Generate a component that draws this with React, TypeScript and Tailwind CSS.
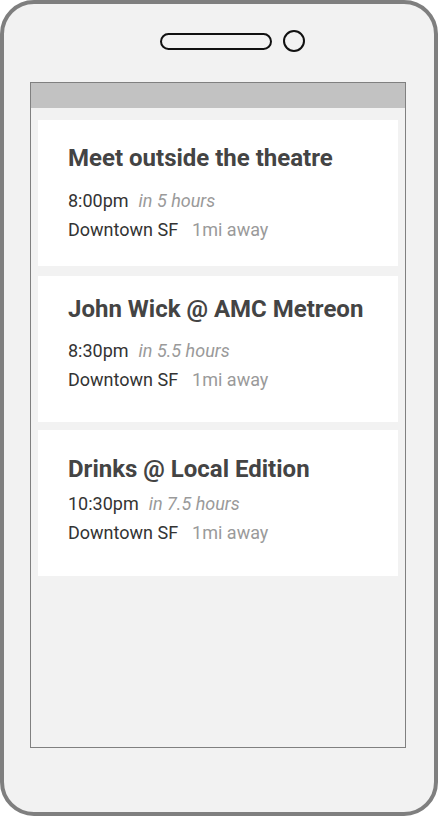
const events = [
  { title: "Meet outside the theatre", time: "8:00pm", rel: "in 5 hours", pad: "pt-[24px]", gap: "mt-[15px]", mt: "" },
  { title: "John Wick @ AMC Metreon", time: "8:30pm", rel: "in 5.5 hours", pad: "pt-[19px]", gap: "mt-[14px]", mt: "mt-[10px]" },
  { title: "Drinks @ Local Edition", time: "10:30pm", rel: "in 7.5 hours", pad: "pt-[25px]", gap: "mt-[7px]", mt: "mt-[8px]" },
];

function EventCard({ ev }: { ev: (typeof events)[number] }) {
  return (
    <div className={`h-[146px] bg-white pl-[30px] ${ev.pad} ${ev.mt}`}>
      <h2 className="text-[24px] font-bold leading-[28px] text-[#444444]">{ev.title}</h2>
      <div className={`${ev.gap} text-[18px] leading-[28.5px] text-[#333333]`}>
        <p>
          {ev.time}
          <span className="ml-[10px] italic text-[#9a9a9a]">{ev.rel}</span>
        </p>
        <p>
          Downtown SF
          <span className="ml-[14px] text-[#9a9a9a]">1mi away</span>
        </p>
      </div>
    </div>
  );
}

export default function App() {
  return (
    <div
      className="h-[816px] w-[438px] bg-white"
      style={{ fontFamily: "Roboto, 'Liberation Sans', sans-serif" }}
    >
      <div className="h-[816px] w-[438px] rounded-[34px] border-4 border-[#7f7f7f] bg-[#f2f2f2]">
        {/* speaker + camera */}
        <div className="ml-[156px] mt-[26px] flex items-center gap-[11px]">
          <div className="h-[17px] w-[112px] rounded-full border-2 border-[#111111]" />
          <div className="h-[22px] w-[22px] rounded-full border-2 border-[#111111]" />
        </div>

        {/* screen */}
        <div className="ml-[26px] mt-[30px] h-[666px] w-[376px] border border-[#808080] bg-[#f2f2f2]">
          <div className="h-[25px] bg-[#c2c2c2]" />
          <div className="px-[7px] pt-[12px]">
            {events.map((ev) => (
              <EventCard key={ev.title} ev={ev} />
            ))}
          </div>
        </div>
      </div>
    </div>
  );
}
